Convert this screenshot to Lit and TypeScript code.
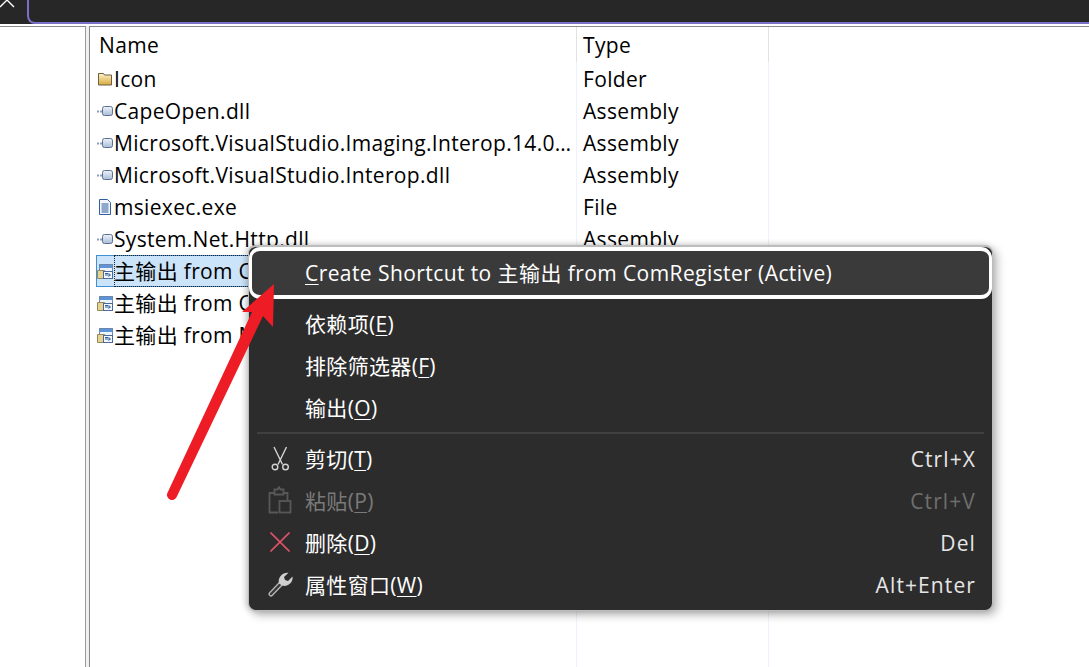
import { LitElement, html, css, svg } from "lit";
import { customElement } from "lit/decorators.js";

const rows: [string, string, string][] = [
  ["folder", "Icon", "Folder"],
  ["asm", "CapeOpen.dll", "Assembly"],
  ["asm", "Microsoft.VisualStudio.Imaging.Interop.14.0…", "Assembly"],
  ["asm", "Microsoft.VisualStudio.Interop.dll", "Assembly"],
  ["file", "msiexec.exe", "File"],
  ["asm", "System.Net.Http.dll", "Assembly"],
  ["out", "主输出 from C", ""],
  ["out", "主输出 from C", ""],
  ["out", "主输出 from M", ""],
];

const icons: Record<string, any> = {
  folder: svg`<svg width="16" height="16" viewBox="0 0 16 16"><defs><linearGradient id="fg" x1="0" y1="0" x2="0" y2="1"><stop offset="0" stop-color="#fdf3c8"/><stop offset="1" stop-color="#d9a93e"/></linearGradient></defs><path d="M1.500 2.500h5l1 1.500h7v10h-13z" fill="url(#fg)" stroke="#6b5f45"/></svg>`,
  asm: svg`<svg width="16" height="16" viewBox="0 0 16 16"><defs><linearGradient id="ag" x1="0" y1="0" x2="0" y2="1"><stop offset="0" stop-color="#eef3fa"/><stop offset="1" stop-color="#a9bcd6"/></linearGradient></defs><path d="M0 8.500h5" stroke="#8b9db8" stroke-width="2" stroke-dasharray="2 1"/><rect x="5.500" y="3.500" width="10" height="9" rx="2" fill="url(#ag)" stroke="#5d6f8e"/></svg>`,
  file: svg`<svg width="16" height="16" viewBox="0 0 16 16"><path d="M2.500 .5h8l3 3v12h-11z" fill="#f2f6fc" stroke="#2f5f9f"/><path d="M4.500 5h7M4.500 7h7M4.500 9h7M4.500 11h7M4.500 13h7" stroke="#2a5a9c"/></svg>`,
  out: svg`<svg width="17" height="17" viewBox="0 0 17 17" style="margin-right:0"><rect x="2.500" y="1.500" width="13" height="12" fill="#eef3fa" stroke="#6d87ad"/><path d="M3 2h12v3H3z" fill="#5f93d8"/><path d="M.5 7.500h7v8h-7z" fill="#e8d28c" stroke="#8e8a6a"/><rect x="6.500" y="8.500" width="9" height="7" fill="#f4f7fb" stroke="#4a6a9a"/><path d="M8 10.500h3M8 12h5M11.500 10.500l2 1.500-2 1.500" fill="none" stroke="#2f5f9f"/></svg>`,
};

const scissors = html`<svg width="18" height="25" viewBox="0 0 18 25" fill="none" stroke="#d4d4d4" stroke-width="1.400"><path d="M3 1l8.500 17.500M15.500 1L7 18.500"/><circle cx="4" cy="21" r="2.800"/><circle cx="14.500" cy="21" r="2.800"/></svg>`;
const paste = html`<svg width="24" height="28" viewBox="0 0 24 28" fill="none" stroke="#585858" stroke-width="1.800"><path d="M10 26.500H1.500V7h5M15.500 7h4v7"/><path d="M6.500 8.500v-5h3L11 1.200l1.500 2.300h3v5z"/><rect x="11.500" y="15" width="11" height="11.500"/></svg>`;
const del = html`<svg width="20" height="20" viewBox="0 0 20 20" fill="none" stroke="#dc5268" stroke-width="1.600"><path d="M.5.5l19 19M19.500.5l-19 19"/></svg>`;
const wrench = html`<svg width="25" height="25" viewBox="0 0 25 25"><path d="M3 22l10.500-11" stroke="#b8b8b8" stroke-width="5" stroke-linecap="round"/><path d="M3 22l10.500-11" stroke="#3a3a3a" stroke-width="2.500" stroke-linecap="round"/><path d="M11 11.500C9.500 6 14 0 20.500.8l-4.500 4.200 1 3 3 1L24.500 4.500C25.500 11 19 15.500 14 13.500z" fill="#cfcfcf"/></svg>`;

@customElement("app-root")
export class AppRoot extends LitElement {
  static styles = css`
    :host {
      display: block;
      width: 1089px;
      height: 667px;
      position: relative;
      overflow: hidden;
      background: #fff;
      font-family: "Open Sans", "Noto Sans CJK SC", sans-serif;
      font-size: 21px;
      letter-spacing: 0.33px;
      color: #000;
    }
    .top {
      height: 24px;
      box-sizing: border-box;
      background: #272727;
      display: flex;
    }
    .close {
      width: 27px;
      position: relative;
      flex: none;
    }
    .tab {
      flex: 1;
      border-left: 2px solid #7b70c8;
      border-bottom: 2px solid #7b70c8;
      border-bottom-left-radius: 8px;
    }
    .body {
      display: flex;
      height: 643px;
      box-sizing: border-box;
      padding-top: 2px;
    }
    .left {
      width: 86px;
      flex: none;
      box-sizing: border-box;
      border-right: 1px solid #9a9a9a;
      border-top: 1px solid #8a8a8a;
    }
    .split {
      width: 4px;
      flex: none;
      box-sizing: border-box;
      background: #f0f0f0;
      border-right: 1px solid #8a8a8a;
    }
    .list {
      flex: 1;
      display: grid;
      grid-template-columns: 486px 192px 1fr;
      grid-template-rows: 35px;
      grid-auto-rows: 32px;
      position: relative;
      padding-top: 1px;
      border-top: 1px solid #8a8a8a;
      align-content: start;
    }
    .grid-lines { position: absolute; inset: 0; pointer-events: none; }
    .col { position: absolute; top: 0; bottom: 0; width: 1px; background: #edf3fc; }
    .col.head { bottom: auto; height: 35px; background: #e2e2e2; }
    .cell { display: flex; align-items: center; white-space: nowrap; overflow: hidden; line-height: 32px; }
    .name { margin-left: 6px; padding-left: 1px; }
    .name svg { flex: none; margin-right: 1px; }
    .type { padding-left: 7px; }
    .hdr { padding-left: 9px; padding-bottom: 1px; }
    .hdr.type { padding-left: 7px; }
    .sel { background: #cce4f9; box-shadow: inset 0 0 0 1px #3f8fd6; }
    .lbl { flex: 1; }
    .sel .lbl { outline: 1px dotted #222; outline-offset: -1px; }

    .menu {
      position: absolute;
      left: 248px;
      top: 245px;
      width: 745px;
      height: 366px;
      box-sizing: border-box;
      background: #2c2c2c;
      border-radius: 8px;
      border: 1px solid #bdbdbd;
      border-top-width: 2px;
      box-shadow: 4px 4px 10px rgba(0, 0, 0, 0.28), -2px 0 6px rgba(0, 0, 0, 0.2);
      color: #fff;
    }
    .item {
      height: 42px;
      display: grid;
      grid-template-columns: 56px 1fr auto;
      align-items: center;
      padding-right: 17px;
      white-space: nowrap;
    }
    .hot {
      height: 52px;
      box-sizing: border-box;
      background: #3a3a3a;
      border: solid #fff;
      border-width: 4px 3px;
      border-radius: 11px;
      padding-bottom: 2px;
      grid-template-columns: 53px 1fr;
      margin-bottom: 3px;
      letter-spacing: 0.42px;
    }
    .ic { display: flex; justify-content: center; box-sizing: border-box; width: 56px; padding-left: 6px; align-items: center; }
    .item.dis { color: #7a7a7a; }
    .key { color: #e6e6e6; letter-spacing: 1.1px; padding-top: 2px; margin-right: -1px; }
    .dis .key { color: #6f6f6f; }
    .sep { height: 2px; background: #404040; margin: 4px 8px 3px; }
    u { text-underline-offset: 3px; text-decoration-thickness: 1px; }
    .arrow { position: absolute; left: 0; top: 0; pointer-events: none; }
    .x { position: absolute; left: -2px; top: -9px; }
  `;

  private item(icon: unknown, label: string, hot: string, key: string, dis = false) {
    return html`<div class="item ${dis ? "dis" : ""}">
      <span class="ic">${icon}</span>
      <span>${label}(<u>${hot}</u>)</span>
      <span class="key">${key}</span>
    </div>`;
  }

  render() {
    return html`
      <div class="top">
        <div class="close">
          <svg class="x" width="20" height="20" viewBox="0 0 20 20" fill="none" stroke="#fff" stroke-width="1.400"><path d="M2 2l14 14M16 2L2 16"/></svg>
        </div>
        <div class="tab"></div>
      </div>
      <div class="body">
        <div class="left"></div>
        <div class="split"></div>
        <div class="list">
          <div class="grid-lines">
            <div class="col" style="left:486px"></div>
            <div class="col" style="left:678px"></div>
            <div class="col head" style="left:486px"></div>
            <div class="col head" style="left:678px"></div>
          </div>
          <div class="cell hdr">Name</div>
          <div class="cell hdr type">Type</div>
          <div></div>
          ${rows.map(
            ([ic, n, t], i) => html`
              <div class="cell name ${i === 6 ? "sel" : ""}">${icons[ic]}<span class="lbl">${n}</span></div>
              <div class="cell type">${t}</div>
              <div></div>
            `
          )}
        </div>
      </div>
      <div class="menu">
        <div class="item hot"><span></span><span><u>C</u>reate Shortcut to 主输出 from ComRegister (Active)</span></div>
        ${this.item("", "依赖项", "E", "")}
        ${this.item("", "排除筛选器", "F", "")}
        ${this.item("", "输出", "O", "")}
        <div class="sep"></div>
        ${this.item(scissors, "剪切", "T", "Ctrl+X")}
        ${this.item(paste, "粘贴", "P", "Ctrl+V", true)}
        ${this.item(del, "删除", "D", "Del")}
        ${this.item(wrench, "属性窗口", "W", "Alt+Enter")}
      </div>
      <svg class="arrow" width="1089" height="667" viewBox="0 0 1089 667">
        <path d="M242 312L274 284L273 327L263 316L176.500 497.200A5 5 0 0 1 167.500 492.800L252 312Z" fill="#ee1c25"/>
      </svg>
    `;
  }
}
